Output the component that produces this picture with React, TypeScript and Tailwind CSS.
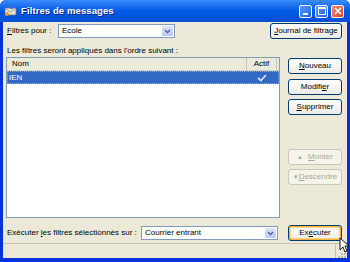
import React from "react";

const font = { fontFamily: '"Liberation Sans", Arial, sans-serif' };

function XpButton({
  children,
  disabled,
  focused,
  className = "",
}: {
  children: React.ReactNode;
  disabled?: boolean;
  focused?: boolean;
  className?: string;
}) {
  return (
    <div
      className={`flex items-center justify-center whitespace-nowrap rounded-[3px] border text-[8px] leading-none ${
        disabled
          ? "border-[#C9C7BA] bg-[#F5F4EA] text-[#ACA899]"
          : "border-[#003C74] bg-gradient-to-b from-white to-[#ECEBE6] text-black"
      } ${focused ? "shadow-[inset_0_0_0_1.5px_#F8B330]" : ""} ${className}`}
    >
      {children}
    </div>
  );
}

function Combo({ value, className = "" }: { value: string; className?: string }) {
  return (
    <div
      className={`flex h-[14px] items-center border border-[#7F9DB9] bg-white pl-[3px] text-[8px] ${className}`}
    >
      <span className="flex-1">{value}</span>
      <div className="m-[1px] flex h-[10px] w-[11px] items-center justify-center rounded-[1px] bg-gradient-to-b from-[#DCE6FC] to-[#B4C8F6]">
        <svg width="7" height="5" viewBox="0 0 7 5">
          <path d="M1 1 L3.5 3.5 L6 1" stroke="#4D6185" strokeWidth="1.3" fill="none" />
        </svg>
      </div>
    </div>
  );
}

export default function App() {
  return (
    <div
      className="relative flex h-[262px] w-[350px] flex-col overflow-hidden rounded-t-[6px] bg-[#0831D9]"
      style={font}
    >
      {/* title bar */}
      <div className="flex h-[22px] items-center bg-gradient-to-b from-[#3A8CFD] via-[#0058E6] to-[#0A50D4] pl-[4px] pr-[6px]">
        <svg width="13" height="12" viewBox="0 0 13 12" className="mr-[4px]">
          <rect x="1" y="3" width="11" height="7" rx="1" fill="#E8E4D4" stroke="#6B6B6B" strokeWidth="0.7" />
          <path d="M1.5 3.5 L6.5 7 L11.5 3.5" stroke="#8A8A8A" strokeWidth="0.8" fill="none" />
          <path d="M2 1 C5 -0.5 9 0.5 10 3 L7 4 Z" fill="#2E6FD8" />
          <circle cx="3" cy="9" r="2" fill="#F0A020" />
        </svg>
        <span className="flex-1 text-[9.5px] font-bold tracking-[0.1px] text-white [text-shadow:1px_1px_0_#0A1E8C]">
          Filtres de messages
        </span>
        <div className="flex gap-[3px]">
          <div className="flex h-[13px] w-[13px] items-end justify-start rounded-[2px] border border-white bg-gradient-to-br from-[#5C9CFF] to-[#1E5FE0] pb-[2px] pl-[3px]">
            <div className="h-[2px] w-[5px] bg-white" />
          </div>
          <div className="flex h-[13px] w-[13px] items-center justify-center rounded-[2px] border border-white bg-gradient-to-br from-[#5C9CFF] to-[#1E5FE0]">
            <div className="h-[8px] w-[8px] border border-t-[2px] border-white" />
          </div>
          <div className="flex h-[13px] w-[13px] items-center justify-center rounded-[2px] border border-white bg-gradient-to-br from-[#F08A6A] to-[#D6401C]">
            <svg width="8" height="8" viewBox="0 0 8 8">
              <path d="M1 1 L7 7 M7 1 L1 7" stroke="white" strokeWidth="1.6" />
            </svg>
          </div>
        </div>
      </div>

      {/* body */}
      <div className="mx-[3px] flex flex-1 flex-col bg-[#ECE9D8] pl-[3px] pr-[5px] pt-[1px] text-black">
        <div className="flex h-[16px] items-center">
          <span className="w-[52px] whitespace-nowrap pl-[1px] text-[8px]">
            <span className="underline">F</span>iltres pour :
          </span>
          <Combo value="Ecole" className="w-[117px]" />
          <div className="flex-1" />
          <XpButton className="h-[16px] w-[72px]">
            <span>
              <span className="underline">J</span>ournal de filtrage
            </span>
          </XpButton>
        </div>

        <div className="mt-[6px] h-[11px] whitespace-nowrap pl-[1px] text-[8px] leading-[11px]">
          Les filtres seront appliqués dans l'ordre suivant :
        </div>

        <div className="mt-[1px] flex">
          <div className="flex h-[161px] w-[274px] flex-col border border-[#7F9DB9] bg-white">
            <div className="flex h-[13px] border-b border-[#D6D2C2] bg-[#EBEADB] text-[8px]">
              <div className="flex flex-1 items-center border-r border-[#C7C5B2] pl-[5px]">Nom</div>
              <div className="flex w-[30px] items-center justify-center border-r border-[#C7C5B2]">Actif</div>
              <div className="w-[2px]" />
            </div>
            <div className="flex h-[13px] items-center border border-dotted border-[#8FA8DC] bg-[#316AC5] text-[8px] text-white">
              <span className="flex-1 pl-[1px]">IEN</span>
              <svg width="10" height="8" viewBox="0 0 10 8" className="mr-[11px]">
                <path d="M1 4 L4 6.5 L9 1" stroke="#DCD8F8" strokeWidth="1.7" fill="none" />
              </svg>
            </div>
          </div>

          <div className="ml-[8px] flex flex-1 flex-col pt-[1px]">
            <XpButton className="h-[16px]">
              <span>
                <span className="underline">N</span>ouveau
              </span>
            </XpButton>
            <XpButton className="mt-[5px] h-[16px]">
              <span>
                Modifi<span className="underline">e</span>r
              </span>
            </XpButton>
            <XpButton className="mt-[4px] h-[16px]">
              <span>
                <span className="underline">S</span>upprimer
              </span>
            </XpButton>
            <XpButton disabled className="mt-[34px] h-[16px]">
              <span>
                <span className="mr-[5px] text-[6px]">▲</span>
                <span className="underline">M</span>onter
              </span>
            </XpButton>
            <XpButton disabled className="mt-[4px] h-[16px]">
              <span>
                <span className="text-[6px]">▼</span>
                <span className="underline">D</span>escendre
              </span>
            </XpButton>
          </div>
        </div>

        <div className="mt-[7px] flex h-[16px] items-center">
          <span className="w-[135px] whitespace-nowrap pl-[1px] text-[8px]">
            Exécuter <span className="underline">l</span>es filtres sélectionnés sur :
          </span>
          <Combo value="Courrier entrant" className="w-[137px]" />
          <div className="flex-1" />
          <XpButton focused className="h-[16px] w-[54px]">
            <span>
              Ex<span className="underline">é</span>cuter
            </span>
          </XpButton>
        </div>

        {/* status bar */}
        <div className="-ml-[3px] -mr-[5px] mt-[2px] flex flex-1 border-t border-[#C5C2B2] bg-[#ECE9D8]">
          <div className="flex-1" />
          <div className="relative w-[12px] border-l border-[#C5C2B2]">
            <svg width="10" height="10" viewBox="0 0 10 10" className="absolute bottom-0 right-0">
              <g fill="#C0BCA8">
                <rect x="7" y="2" width="2" height="2" />
                <rect x="4" y="5" width="2" height="2" />
                <rect x="7" y="5" width="2" height="2" />
                <rect x="1" y="8" width="2" height="2" />
                <rect x="4" y="8" width="2" height="2" />
                <rect x="7" y="8" width="2" height="2" />
              </g>
            </svg>
          </div>
        </div>
      </div>
      <div className="h-[4px]" />

      {/* mouse cursor */}
      <svg width="11" height="17" viewBox="0 0 11 17" className="absolute left-[339px] top-[237px]">
        <path d="M1 1 L1 13 L4 10 L6 15 L8 14 L6 9 L10 9 Z" fill="white" stroke="black" strokeWidth="0.9" />
      </svg>
    </div>
  );
}
